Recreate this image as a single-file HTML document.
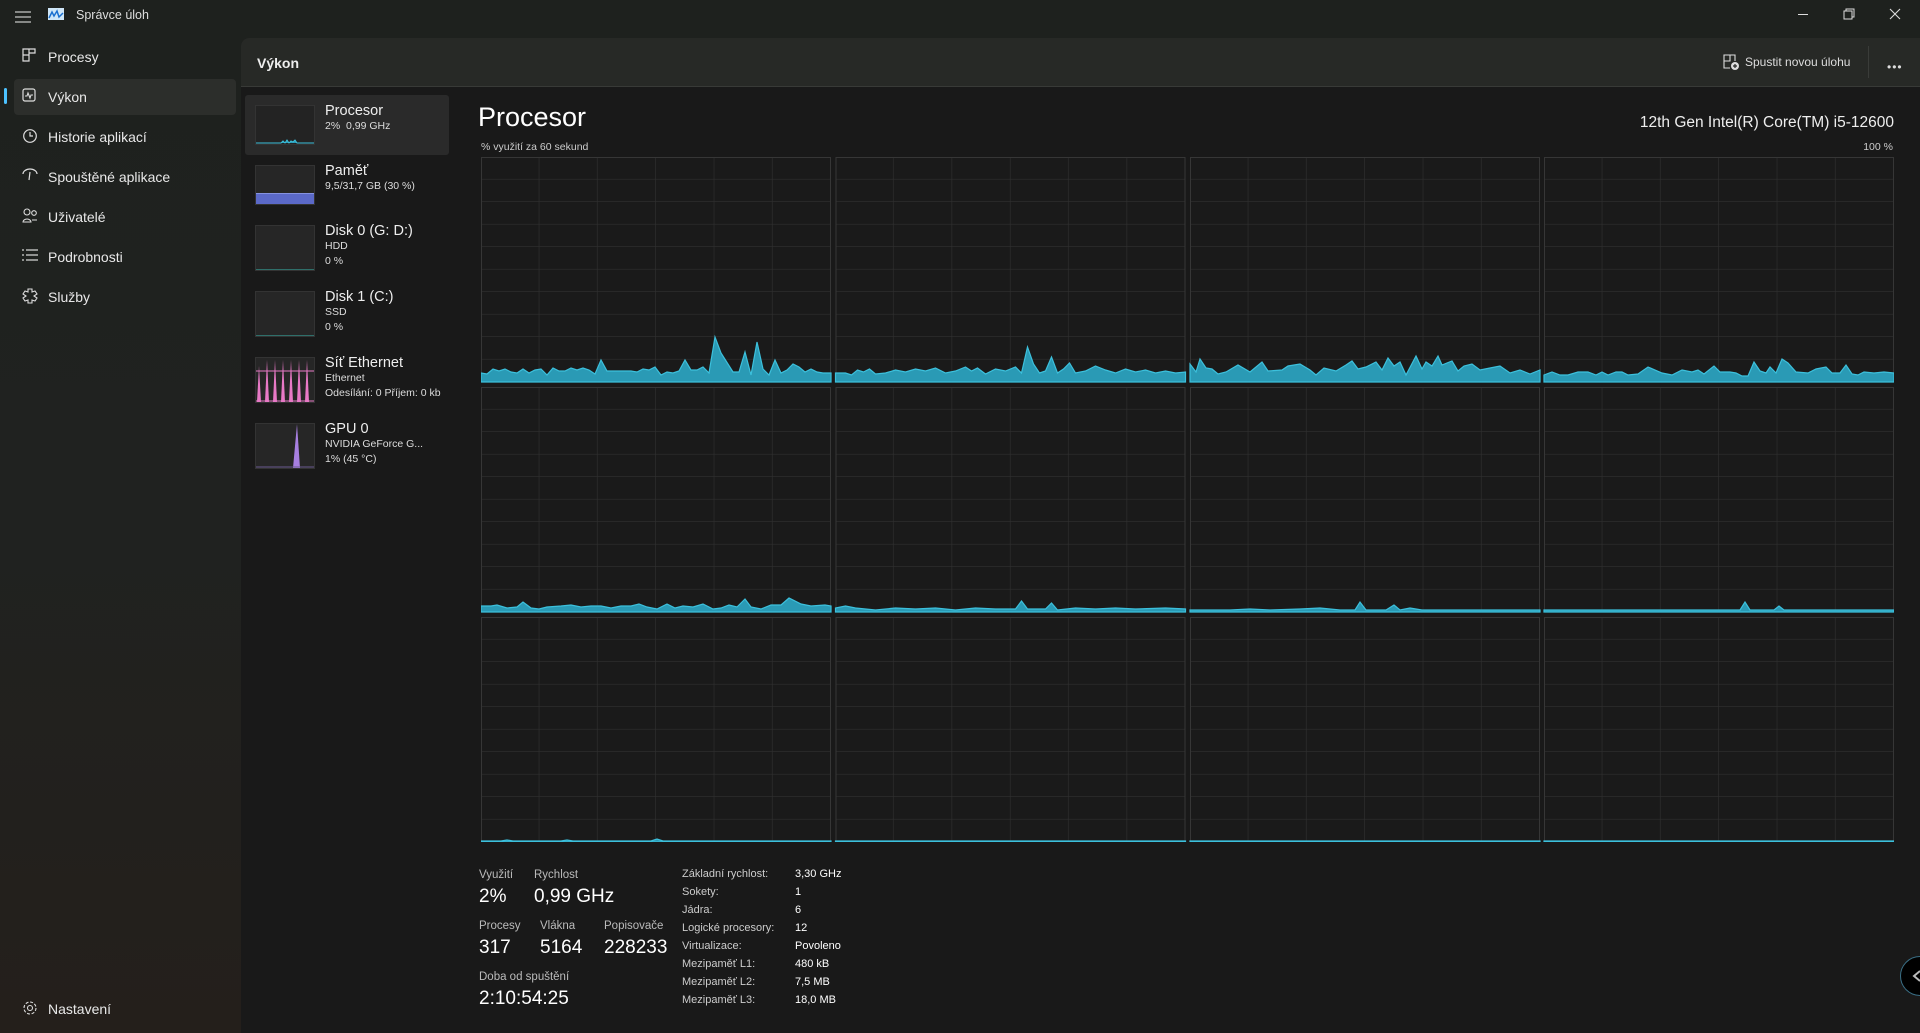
<!DOCTYPE html>
<html><head><meta charset="utf-8">
<style>
*{margin:0;padding:0;box-sizing:border-box}
body{width:1920px;height:1033px;overflow:hidden;background:linear-gradient(180deg,#1e211e 0%,#202220 50%,#241f1b 100%);font-family:"Liberation Sans",sans-serif;color:#fff;position:relative}
.abs{position:absolute}
.nav{position:absolute;left:14px;width:222px;height:36px;display:flex;align-items:center;font-size:14px;color:#e8e8e8}
.nav svg{position:absolute;left:8px;top:9px}
.nav span{position:absolute;left:34px}
.sel{background:#2c2e2b;border-radius:4px}
.panel{position:absolute;left:241px;top:38px;width:1679px;height:995px;background:#191919;border-top-left-radius:8px;overflow:hidden}
.hdr{position:absolute;left:0;top:0;width:100%;height:49px;background:#272926;border-bottom:1px solid #383a37}
.item{position:absolute;left:4px;width:204px;height:60px}
.thumb{position:absolute;left:10px;width:60px;background:#262626;border:1px solid #333}
.it{position:absolute;left:84px;font-size:14.5px;color:#eee;white-space:nowrap}
.is{position:absolute;left:84px;font-size:10.5px;color:#ddd;white-space:nowrap;line-height:15px}
.lab{position:absolute;font-size:11.5px;color:#bbb}
.big{position:absolute;font-size:19px;color:#fff}
.r{position:absolute;font-size:11px;color:#ccc}
.v{position:absolute;font-size:11px;color:#fff}
</style></head><body>
<!-- title bar -->
<svg class="abs" style="left:15px;top:10px" width="16" height="13"><g stroke="#ccc" stroke-width="1.2"><line x1="0" y1="2" x2="16" y2="2"/><line x1="0" y1="7" x2="16" y2="7"/><line x1="0" y1="12" x2="16" y2="12"/></g></svg>
<svg class="abs" style="left:48px;top:8px" width="16" height="12"><rect width="16" height="12" fill="#cfe6f8"/><polyline points="1,10 4,4 6,8 9,3 11,9 15,5" fill="none" stroke="#1a6fd0" stroke-width="1.5"/></svg>
<div class="abs" style="left:76px;top:8px;font-size:12.5px;color:#ddd">Správce úloh</div>
<div class="abs" style="left:1798px;top:14px;width:10px;height:1px;background:#ddd"></div>
<svg class="abs" style="left:1843px;top:8px" width="12" height="12"><rect x="1" y="3" width="8" height="8" fill="none" stroke="#ddd"/><path d="M3 3V1h8v8H9" fill="none" stroke="#ddd"/></svg>
<svg class="abs" style="left:1889px;top:8px" width="12" height="12"><path d="M1 1L11 11M11 1L1 11" stroke="#ddd" stroke-width="1.1"/></svg>

<!-- nav -->
<div class="nav" style="top:39px"><svg width="14" height="14"><path d="M1 1h6v6H1zM7 1h6v4H7zM1 7h6v6H1z" fill="none" stroke="#ddd" stroke-width="1.2"/></svg><span>Procesy</span></div>
<div class="nav sel" style="top:79px"><svg width="14" height="14"><rect x="1" y="1" width="12" height="12" rx="2" fill="none" stroke="#ddd" stroke-width="1.2"/><polyline points="3,8 5,8 6,5 8,10 9,7 11,7" fill="none" stroke="#ddd" stroke-width="1.1"/></svg><span>Výkon</span></div>
<div class="abs" style="left:4px;top:88px;width:3px;height:16px;background:#4cc2ff;border-radius:2px"></div>
<div class="nav" style="top:119px"><svg width="16" height="16"><circle cx="8" cy="8" r="6.3" fill="none" stroke="#ddd" stroke-width="1.2"/><path d="M8 4v4h3" fill="none" stroke="#ddd" stroke-width="1.2"/></svg><span>Historie aplikací</span></div>
<div class="nav" style="top:159px"><svg width="16" height="14"><path d="M1 6a7 5 0 0 1 14 0M8 4l-1 8" fill="none" stroke="#ddd" stroke-width="1.2"/></svg><span>Spouštěné aplikace</span></div>
<div class="nav" style="top:199px"><svg width="16" height="16"><circle cx="5" cy="4" r="3" fill="none" stroke="#ddd" stroke-width="1.1"/><circle cx="12" cy="5" r="2.3" fill="none" stroke="#ddd" stroke-width="1.1"/><path d="M1 14a4 3 0 0 1 8 0zM10 12h5" fill="none" stroke="#ddd" stroke-width="1.1"/></svg><span>Uživatelé</span></div>
<div class="nav" style="top:239px"><svg width="16" height="14"><g stroke="#ddd" stroke-width="1.2"><line x1="0" y1="2" x2="2" y2="2"/><line x1="4" y1="2" x2="16" y2="2"/><line x1="0" y1="7" x2="2" y2="7"/><line x1="4" y1="7" x2="16" y2="7"/><line x1="0" y1="12" x2="2" y2="12"/><line x1="4" y1="12" x2="16" y2="12"/></g></svg><span>Podrobnosti</span></div>
<div class="nav" style="top:279px"><svg width="16" height="16"><path d="M6 1h4v3l3-1 2 3-3 2 3 2-2 3-3-1v3H6v-3l-3 1-2-3 3-2-3-2 2-3 3 1z" fill="none" stroke="#ddd" stroke-width="1.1"/></svg><span>Služby</span></div>
<div class="nav" style="top:991px"><svg width="16" height="16"><circle cx="8" cy="8" r="2.5" fill="none" stroke="#ddd" stroke-width="1.1"/><circle cx="8" cy="8" r="6" fill="none" stroke="#ddd" stroke-width="1.1" stroke-dasharray="3 1.7"/></svg><span>Nastavení</span></div>

<div class="panel">
 <div class="hdr">
  <div class="abs" style="left:16px;top:17px;font-size:14px;font-weight:bold;color:#eee">Výkon</div>
  <svg class="abs" style="left:1482px;top:16px" width="16" height="16"><path d="M1 1h6v6H1zM7 1h5v6M1 7v7h6" fill="none" stroke="#ddd" stroke-width="1.1"/><circle cx="12" cy="12" r="4" fill="#ddd"/><path d="M12 10v4M10 12h4" stroke="#272926" stroke-width="1.2"/></svg>
  <div class="abs" style="left:1504px;top:17px;font-size:12px;color:#ddd">Spustit novou úlohu</div>
  <div class="abs" style="left:1627px;top:8px;width:1px;height:32px;background:#3a3c39"></div>
  <div class="abs" style="left:1646px;top:22px;font-size:12px;color:#ddd;letter-spacing:1px">•••</div>
 </div>
 <!-- list -->
 <div class="item" style="top:57px;background:#2a2a2a;border-radius:3px"></div>
 <div class="thumb" style="left:14px;top:67px;height:40px;background:#232323"><svg width="58" height="38"><path d="M0 37 L25 37 L27 35 L29 37 L31 34 L33 37 L35 35 L37 36 L39 34 L41 37 L58 37" fill="#2a9ab5" stroke="#3cc0dc" stroke-width="1"/></svg></div>
 <div class="it" style="left:24px;top:46px;display:none"></div>
 <div class="it" style="left:24px;top:95px;position:absolute"></div>
 <div class="it" style="left:84px;top:65px">Procesor</div>
 <div class="is" style="left:84px;top:81px">2%&nbsp; 0,99 GHz</div>

 <div class="thumb" style="left:14px;top:127px;height:40px"><div style="position:absolute;left:0;bottom:0;width:58px;height:11px;background:#5b69c8;border-top:1px solid #8592e0"></div></div>
 <div class="it" style="left:84px;top:125px">Paměť</div>
 <div class="is" style="left:84px;top:141px">9,5/31,7 GB (30 %)</div>

 <div class="thumb" style="left:14px;top:187px;height:46px"><div style="position:absolute;left:0;bottom:0;width:58px;height:1px;background:#2f6f6a"></div></div>
 <div class="it" style="left:84px;top:185px">Disk 0 (G: D:)</div>
 <div class="is" style="left:84px;top:201px">HDD<br>0 %</div>

 <div class="thumb" style="left:14px;top:253px;height:46px"><div style="position:absolute;left:0;bottom:0;width:58px;height:1px;background:#2f6f6a"></div></div>
 <div class="it" style="left:84px;top:251px">Disk 1 (C:)</div>
 <div class="is" style="left:84px;top:267px">SSD<br>0 %</div>

 <div class="thumb" style="left:14px;top:319px;height:46px"><svg width="58" height="44"><g fill="#e879c6"><path d="M1 44L3 8 5 44z"/><path d="M9 44L11 2 13 44z"/><path d="M17 44L19 2 21 44z"/><path d="M25 44L27 2 29 44z"/><path d="M33 44L35 2 37 44z"/><path d="M41 44L43 2 45 44z"/><path d="M49 44L51 2 53 44z"/></g><line x1="0" y1="13" x2="58" y2="13" stroke="#e879c6"/><line x1="0" y1="43" x2="58" y2="43" stroke="#e879c6"/></svg></div>
 <div class="it" style="left:84px;top:317px">Síť Ethernet</div>
 <div class="is" style="left:84px;top:333px">Ethernet<br>Odesílání: 0 Příjem: 0 kb</div>

 <div class="thumb" style="left:14px;top:385px;height:46px"><svg width="58" height="44"><path d="M37 44L41 0 44 44z" fill="#a77fe0"/><line x1="0" y1="43" x2="58" y2="43" stroke="#6a5a90"/></svg></div>
 <div class="it" style="left:84px;top:383px">GPU 0</div>
 <div class="is" style="left:84px;top:399px">NVIDIA GeForce G...<br>1% (45 °C)</div>

 <!-- main -->
 <div class="abs" style="left:237px;top:64px;font-size:27px;color:#fff">Procesor</div>
 <div class="abs" style="right:26px;top:76px;font-size:15.5px;color:#eee">12th Gen Intel(R) Core(TM) i5-12600</div>
 <div class="abs" style="left:240px;top:103px;font-size:10.5px;color:#ccc">% využití za 60 sekund</div>
 <div class="abs" style="right:27px;top:103px;font-size:10.5px;color:#ccc">100 %</div>

 <svg class="abs" style="left:240px;top:119px" width="1413" height="685">
  <defs>
   <pattern id="g" patternUnits="userSpaceOnUse" width="58.33" height="22.5"><path d="M58.33 0V22.5M0 22.5H58.33" fill="none" stroke="#303030" stroke-width="1.2"/></pattern>
   <g id="cell"><rect x="0" y="0" width="350" height="225" fill="#1a1a1a"/><rect x="0" y="0" width="350" height="225" fill="url(#g)"/><rect x="0.5" y="0.5" width="349" height="224" fill="none" stroke="#363636"/></g>
  </defs>
  <g transform="translate(0,0)"><use href="#cell"/><path d="M0,225 L0,216 6,217 12,212 18,214 24,212 30,215 36,216 42,212 48,216 54,213 60,212 66,218 72,211 78,214 84,214 90,211 96,213 102,211 108,213 114,217 120,203 126,214 132,214 150,214 156,215 162,212 168,213 174,210 180,218 186,215 192,216 198,214 204,203 210,213 216,213 222,210 228,216 234,180 240,196 252,215 258,215 264,195 270,218 276,185 282,212 288,218 294,203 300,216 306,213 312,207 318,210 324,215 330,212 336,215 342,216 350,216 350,225Z" fill="#2a9ab5" stroke="#3cc0dc" stroke-width="1.2"/></g>
  <g transform="translate(354.5,0)"><use href="#cell"/><path d="M0,225 L0,216 10,216 16,218 22,213 28,215 34,212 40,217 50,216 60,213 70,215 80,212 90,214 100,211 110,216 120,214 130,210 136,214 142,211 150,217 160,212 170,214 180,210 186,216 192,190 198,207 204,216 210,214 216,200 222,216 228,212 234,206 240,216 250,214 260,209 270,213 280,216 290,212 300,215 310,213 320,216 330,214 340,216 350,215 350,225Z" fill="#2a9ab5" stroke="#3cc0dc" stroke-width="1.2"/></g>
  <g transform="translate(709,0)"><use href="#cell"/><path d="M0,225 L0,207 6,215 10,202 16,211 22,212 28,217 36,215 48,208 60,215 72,205 78,214 92,213 98,209 110,207 120,213 126,218 134,211 146,214 156,208 162,204 168,212 176,210 186,205 192,213 198,201 204,209 210,205 216,218 226,199 232,212 236,205 242,209 248,199 252,208 262,204 268,214 274,209 282,207 290,213 300,211 310,209 320,216 330,213 340,217 350,213 350,225Z" fill="#2a9ab5" stroke="#3cc0dc" stroke-width="1.2"/></g>
  <g transform="translate(1063,0)"><use href="#cell"/><path d="M0,225 L0,218 8,215 16,218 24,218 34,215 44,215 52,218 58,215 64,218 72,215 78,215 84,218 94,217 104,210 118,216 128,218 138,213 148,215 154,213 160,217 170,209 176,215 186,215 192,216 198,219 204,219 210,205 216,214 222,216 226,210 232,216 238,202 244,206 252,215 264,216 272,212 282,210 288,216 296,216 302,208 308,217 314,218 320,215 330,216 340,215 350,216 350,225Z" fill="#2a9ab5" stroke="#3cc0dc" stroke-width="1.2"/></g>

  <g transform="translate(0,230)"><use href="#cell"/><path d="M0,225 L0,219 10,219 16,218 26,221 36,220 42,215 50,221 58,222 66,220 80,219 90,218 100,220 110,219 120,219 130,221 140,219 150,219 158,217 166,220 176,222 186,217 194,221 202,219 212,220 222,217 232,222 240,221 248,218 256,220 264,212 270,220 280,222 290,218 300,218 308,211 320,217 330,219 344,218 350,219 350,225Z" fill="#2a9ab5" stroke="#3cc0dc" stroke-width="1.2"/></g>
  <g transform="translate(354.5,230)"><use href="#cell"/><path d="M0,225 L0,221 10,219 20,221 40,223 60,221 80,222 100,221 120,223 140,221 160,222 180,222 186,214 192,222 210,222 216,216 222,223 240,221 260,222 280,221 300,222 330,221 350,222 350,225Z" fill="#2a9ab5" stroke="#3cc0dc" stroke-width="1.2"/></g>
  <g transform="translate(709,230)"><use href="#cell"/><path d="M0,225 L0,223 40,223 60,222 80,223 110,222 130,221 150,223 165,223 170,215 176,223 196,223 204,218 210,223 220,221 232,223 350,223 350,225Z" fill="#2a9ab5" stroke="#3cc0dc" stroke-width="1.2"/></g>
  <g transform="translate(1063,230)"><use href="#cell"/><path d="M0,225 L0,223 196,223 201,215 206,223 230,223 235,219 240,223 350,223 350,225Z" fill="#2a9ab5" stroke="#3cc0dc" stroke-width="1.2"/></g>

  <g transform="translate(0,460)"><use href="#cell"/><path d="M0,225 L0,224 20,224 26,223 32,224 80,224 86,223 92,224 170,224 176,222 182,224 350,224 350,225Z" fill="#2a9ab5" stroke="#3cc0dc" stroke-width="1.2"/></g>
  <g transform="translate(354.5,460)"><use href="#cell"/><path d="M0,225 L0,224 350,224 350,225Z" fill="#2a9ab5" stroke="#3cc0dc" stroke-width="1.2"/></g>
  <g transform="translate(709,460)"><use href="#cell"/><path d="M0,225 L0,224 350,224 350,225Z" fill="#2a9ab5" stroke="#3cc0dc" stroke-width="1.2"/></g>
  <g transform="translate(1063,460)"><use href="#cell"/><path d="M0,225 L0,224 350,224 350,225Z" fill="#2a9ab5" stroke="#3cc0dc" stroke-width="1.2"/></g>
 </svg>

 <!-- stats -->
 <div class="lab" style="left:238px;top:831px">Využití</div>
 <div class="lab" style="left:293px;top:831px">Rychlost</div>
 <div class="big" style="left:238px;top:848px">2%</div>
 <div class="big" style="left:293px;top:848px">0,99 GHz</div>
 <div class="lab" style="left:238px;top:882px">Procesy</div>
 <div class="lab" style="left:299px;top:882px">Vlákna</div>
 <div class="lab" style="left:363px;top:882px">Popisovače</div>
 <div class="big" style="left:238px;top:899px">317</div>
 <div class="big" style="left:299px;top:899px">5164</div>
 <div class="big" style="left:363px;top:899px">228233</div>
 <div class="lab" style="left:238px;top:933px">Doba od spuštění</div>
 <div class="big" style="left:238px;top:950px">2:10:54:25</div>

 <div class="r" style="left:441px;top:830px">Základní rychlost:</div><div class="v" style="left:554px;top:830px">3,30 GHz</div>
 <div class="r" style="left:441px;top:848px">Sokety:</div><div class="v" style="left:554px;top:848px">1</div>
 <div class="r" style="left:441px;top:866px">Jádra:</div><div class="v" style="left:554px;top:866px">6</div>
 <div class="r" style="left:441px;top:884px">Logické procesory:</div><div class="v" style="left:554px;top:884px">12</div>
 <div class="r" style="left:441px;top:902px">Virtualizace:</div><div class="v" style="left:554px;top:902px">Povoleno</div>
 <div class="r" style="left:441px;top:920px">Mezipaměť L1:</div><div class="v" style="left:554px;top:920px">480 kB</div>
 <div class="r" style="left:441px;top:938px">Mezipaměť L2:</div><div class="v" style="left:554px;top:938px">7,5 MB</div>
 <div class="r" style="left:441px;top:956px">Mezipaměť L3:</div><div class="v" style="left:554px;top:956px">18,0 MB</div>

 <div class="abs" style="left:1659px;top:918px;width:40px;height:40px;border-radius:50%;background:#000;border:1px solid #3a6f86"></div>
 <svg class="abs" style="left:1671px;top:932px" width="10" height="12"><path d="M8 1L2 6l6 5" fill="none" stroke="#bbb" stroke-width="2"/></svg>
</div>
</body></html>
